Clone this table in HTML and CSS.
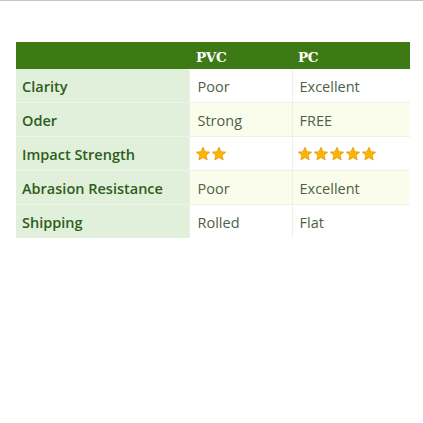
FILE: index.html
```html
<!DOCTYPE html>
<html>
<head>
<meta charset="utf-8">
<link rel="stylesheet" href="styles.css">
</head>
<body>
<div class="topline"></div>
<table class="cmp">
  <thead>
    <tr><th class="blank"></th><th>PVC</th><th>PC</th></tr>
  </thead>
  <tbody>
    <tr class="odd"><td class="lbl">Clarity</td><td>Poor</td><td>Excellent</td></tr>
    <tr class="even"><td class="lbl">Oder</td><td>Strong</td><td>FREE</td></tr>
    <tr class="odd"><td class="lbl">Impact Strength</td>
      <td><span class="stars"><svg viewBox="0 0 24 24"><path d="M12 2l2.9 6.6 7.1.6-5.4 4.7 1.6 7-6.2-3.7-6.2 3.7 1.6-7L2 9.2l7.1-.6z"/></svg><svg viewBox="0 0 24 24"><path d="M12 2l2.9 6.6 7.1.6-5.4 4.7 1.6 7-6.2-3.7-6.2 3.7 1.6-7L2 9.2l7.1-.6z"/></svg></span></td>
      <td><span class="stars"><svg viewBox="0 0 24 24"><path d="M12 2l2.9 6.6 7.1.6-5.4 4.7 1.6 7-6.2-3.7-6.2 3.7 1.6-7L2 9.2l7.1-.6z"/></svg><svg viewBox="0 0 24 24"><path d="M12 2l2.9 6.6 7.1.6-5.4 4.7 1.6 7-6.2-3.7-6.2 3.7 1.6-7L2 9.2l7.1-.6z"/></svg><svg viewBox="0 0 24 24"><path d="M12 2l2.9 6.6 7.1.6-5.4 4.7 1.6 7-6.2-3.7-6.2 3.7 1.6-7L2 9.2l7.1-.6z"/></svg><svg viewBox="0 0 24 24"><path d="M12 2l2.9 6.6 7.1.6-5.4 4.7 1.6 7-6.2-3.7-6.2 3.7 1.6-7L2 9.2l7.1-.6z"/></svg><svg viewBox="0 0 24 24"><path d="M12 2l2.9 6.6 7.1.6-5.4 4.7 1.6 7-6.2-3.7-6.2 3.7 1.6-7L2 9.2l7.1-.6z"/></svg></span></td></tr>
    <tr class="even"><td class="lbl">Abrasion Resistance</td><td>Poor</td><td>Excellent</td></tr>
    <tr class="odd"><td class="lbl">Shipping</td><td>Rolled</td><td>Flat</td></tr>
  </tbody>
</table>
</body>
</html>
```

FILE: styles.css
```css
html, body {
  margin: 0;
  padding: 0;
  background: #ffffff;
}
body {
  font-family: "Open Sans", "Liberation Sans", sans-serif;
}
.topline {
  height: 1px;
  background: #c4c4c4;
  margin-bottom: 41px;
}
.cmp {
  margin-left: 16px;
  width: 394px;
  border-collapse: collapse;
  table-layout: fixed;
}
.cmp th {
  background: #3d7a16;
  color: #ffffff;
  font-family: "DejaVu Serif", "Liberation Serif", serif;
  font-weight: bold;
  font-size: 13.5px;
  text-align: left;
  height: 25px;
  padding: 2px 0 0 7px;
  letter-spacing: -0.3px;
}
.cmp th.blank { width: 173px; padding: 0; }
.cmp th:nth-child(2) { width: 96px; }
.cmp th:nth-child(3) { padding-left: 6px; }
.cmp td {
  height: 32px;
  padding: 1px 0 0 8px;
  font-size: 14.5px;
  color: #4f5f47;
  border-top: 1px solid #eef2e4;
  border-left: 1px solid #edf0e6;
  vertical-align: middle;
}
.cmp td:nth-child(3) { padding-left: 7px; }
.cmp tr:first-child td { border-top: none; }
.cmp td.lbl {
  background: #e0f0da;
  color: #2f5d1b;
  font-weight: 600;
  padding-left: 6px;
  border-left: none;
  border-top: 1px solid #eaf5e6;
}
.cmp tr.odd td { background-color: #ffffff; }
.cmp tr.even td { background-color: #fafdeb; }
.cmp tr td.lbl { background-color: #e0f0da; }
.stars {
  display: flex;
  gap: 0;
  align-items: center;
  margin-left: -3px;
}
.stars svg {
  width: 16px;
  height: 16px;
  fill: #f8b800;
  stroke: #ec9200;
  stroke-width: 1.2;
}
```
